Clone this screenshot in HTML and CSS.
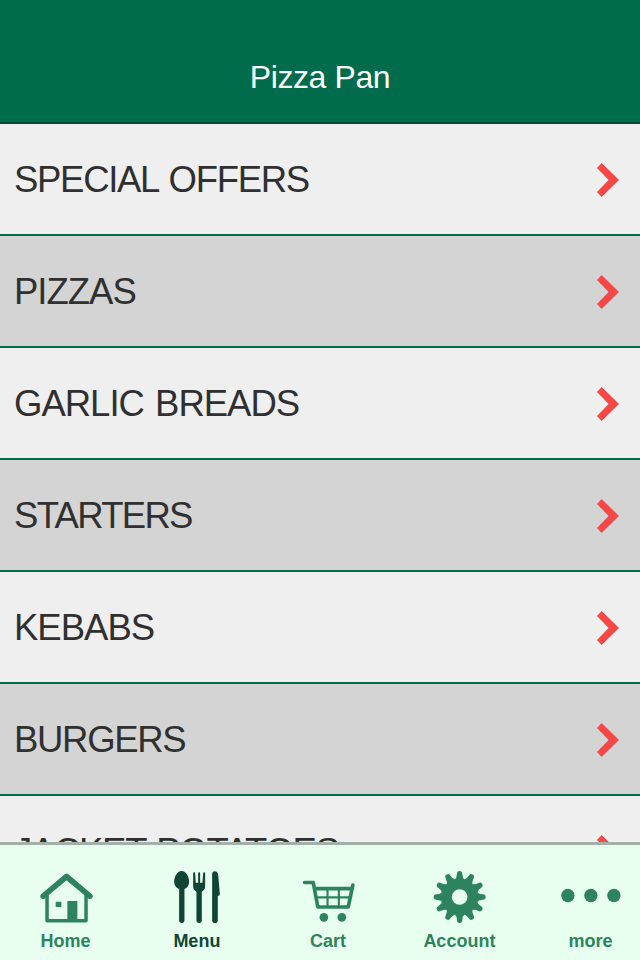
FILE: index.html
```html
<!DOCTYPE html>
<html lang="en">
<head>
<meta charset="utf-8">
<title>Pizza Pan</title>
<link rel="stylesheet" href="styles.css">
</head>
<body>
<svg class="defs" aria-hidden="true">
  <symbol id="chevron" viewBox="0 0 66 102"><path d="M14 0 66 51 14 102 0 87 35 51 0 15Z"/></symbol>
  <path id="tooth" d="M-17-49Q-8-58-8-70A8 8 0 0 1 8-70Q8-58 17-49Z"/>
</svg>
<div class="app">
  <header class="header"><h1>Pizza Pan</h1></header>
  <main class="list">
    <a class="row snug"><span>SPECIAL OFFERS</span><svg class="chevron"><use href="#chevron"/></svg></a>
    <a class="row"><span>PIZZAS</span><svg class="chevron"><use href="#chevron"/></svg></a>
    <a class="row"><span>GARLIC BREADS</span><svg class="chevron"><use href="#chevron"/></svg></a>
    <a class="row tight"><span>STARTERS</span><svg class="chevron"><use href="#chevron"/></svg></a>
    <a class="row"><span>KEBABS</span><svg class="chevron"><use href="#chevron"/></svg></a>
    <a class="row snug"><span>BURGERS</span><svg class="chevron"><use href="#chevron"/></svg></a>
    <a class="row snug"><span>JACKET POTATOES</span><svg class="chevron"><use href="#chevron"/></svg></a>
  </main>
  <nav class="tabs">
    <a class="tab">
      <svg class="icon" viewBox="76.9 120 240 180">
        <path class="line" stroke-width="17" d="M128.500 198.500 198.500 139.500 268.500 198.500"/>
        <path class="line" stroke-width="10.500" d="M140 197V272H257V197"/>
        <path d="M201 213H231V272H201ZM166 215H183V231H166Z"/>
      </svg>
      <span>Home</span>
    </a>
    <a class="tab active">
      <svg class="icon" viewBox="80.6 120 240 180">
        <path d="M154.500 123C169 123 177 143 177 155C177 166 171 173 163 177V271A8 8 0 0 1 147 271V177C138 173 132 166 132 155C132 143 140 123 154.500 123Z"/>
        <path d="M189 130Q189 127 192 127T195 130L197 158H204V130Q204 127 207 127T210 130V158H217L219 130Q219 127 222 127T225 130V169Q225 180 215 185V271A8 8 0 0 1 199 271V185Q189 180 189 169Z"/>
        <path d="M246 132Q246 124 254 124Q262 124 264 133L269 192Q269 198 263 198V271A8 8 0 0 1 246 271Z"/>
      </svg>
      <span>Menu</span>
    </a>
    <a class="tab">
      <svg class="icon" viewBox="84.4 120 240 180">
        <path class="line" stroke-width="11" d="M134 157.500H160L174 231H265L279 165M165 176H275"/>
        <path class="line" stroke-width="6.500" d="M169 202H271M203 176V231M237 176V231"/>
        <circle cx="192" cy="262" r="13"/><circle cx="246" cy="262" r="13"/>
      </svg>
      <span>Cart</span>
    </a>
    <a class="tab">
      <svg class="icon" viewBox="88.1 120 240 180">
        <g transform="translate(210 201)">
          <circle class="ring" r="38.500"/>
          <use href="#tooth"/><use href="#tooth" transform="rotate(30)"/><use href="#tooth" transform="rotate(60)"/>
          <use href="#tooth" transform="rotate(90)"/><use href="#tooth" transform="rotate(120)"/><use href="#tooth" transform="rotate(150)"/>
          <use href="#tooth" transform="rotate(180)"/><use href="#tooth" transform="rotate(210)"/><use href="#tooth" transform="rotate(240)"/>
          <use href="#tooth" transform="rotate(270)"/><use href="#tooth" transform="rotate(300)"/><use href="#tooth" transform="rotate(330)"/>
        </g>
      </svg>
      <span>Account</span>
    </a>
    <a class="tab">
      <svg class="icon" viewBox="91.9 120 240 180">
        <circle cx="142.500" cy="196.500" r="20"/><circle cx="211.500" cy="196.500" r="20"/><circle cx="280.500" cy="196.500" r="20"/>
      </svg>
      <span>more</span>
    </a>
  </nav>
</div>
</body>
</html>
```
FILE: styles.css
```css
* {
  box-sizing: border-box;
}

body {
  margin: 0;
  font-family: "Liberation Sans", Arial, sans-serif;
}

.defs {
  display: none;
}

.app {
  display: flex;
  flex-direction: column;
  width: 640px;
  height: 960px;
  overflow: hidden;
}

.header {
  flex: 0 0 124px;
  padding-top: 58px;
  background: #006c4c;
  border-bottom: 2px solid #004c35;
}

.header h1 {
  margin: 0;
  color: #fff;
  font-size: 32px;
  font-weight: 400;
  line-height: 38px;
  letter-spacing: -0.4px;
  text-align: center;
}

.list {
  flex: 1;
  min-height: 0;
  overflow: hidden;
}

.row {
  display: flex;
  align-items: center;
  justify-content: space-between;
  height: 112px;
  padding: 2px 21px 0 14px;
  background: #efefef;
  border-bottom: 2px solid #006c4c;
  color: #303030;
  font-size: 36.5px;
  letter-spacing: -1px;
  word-spacing: 2px;
  white-space: nowrap;
}

.row.snug {
  letter-spacing: -1.3px;
}

.row.tight {
  letter-spacing: -1.7px;
}

.row:nth-child(even) {
  background: #d4d4d4;
}

.chevron {
  width: 22px;
  height: 34px;
  fill: #f74848;
}

.tabs {
  display: flex;
  flex: 0 0 118px;
  background: #e8fff0;
  border-top: 3px solid #a0b1a7;
}

.tab {
  display: flex;
  flex: 0 0 131.25px;
  flex-direction: column;
  align-items: center;
  padding-top: 25px;
  color: #2d845c;
  font-size: 18px;
  font-weight: 700;
  line-height: 22px;
}

.tab.active {
  color: #104535;
}

.icon {
  width: 80px;
  height: 60px;
  fill: currentColor;
}

.line {
  fill: none;
  stroke: currentColor;
  stroke-linecap: round;
  stroke-linejoin: round;
}

.ring {
  fill: none;
  stroke: currentColor;
  stroke-width: 30;
}
```
